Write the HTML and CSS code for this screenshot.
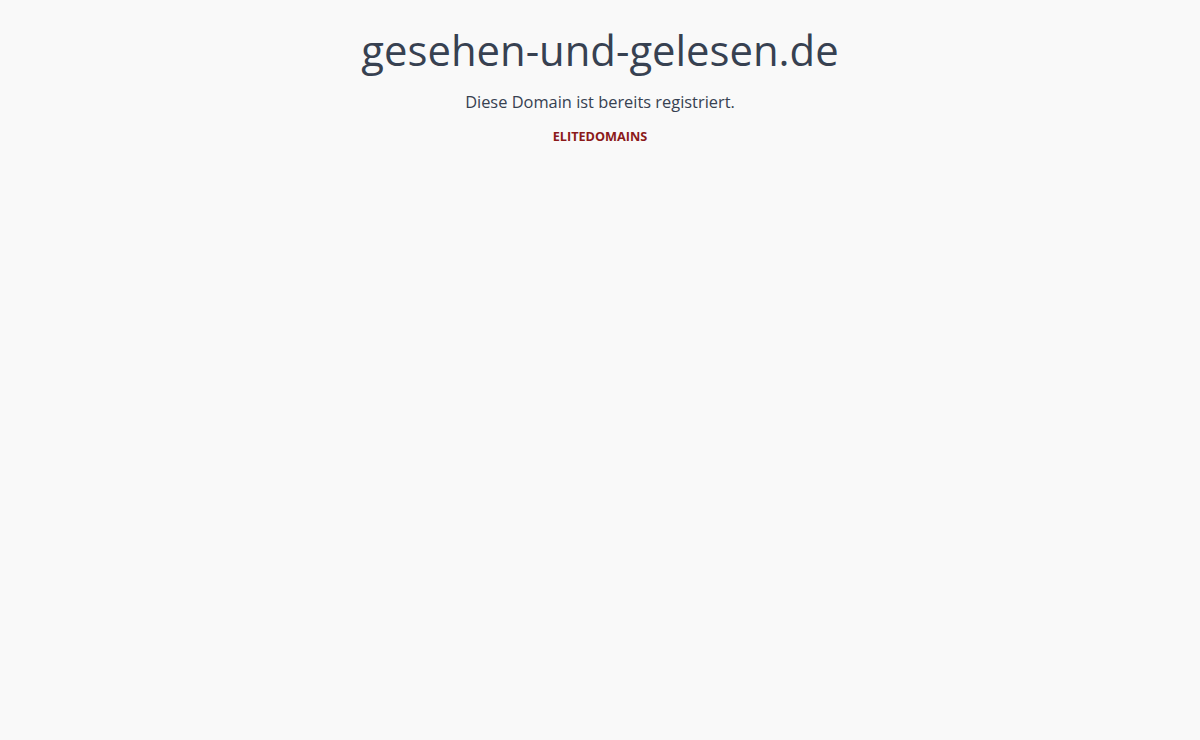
FILE: index.html
```html
<!DOCTYPE html>
<html lang="de">
<head>
<meta charset="utf-8">
<title>gesehen-und-gelesen.de</title>
<link rel="stylesheet" href="styles.css">
</head>
<body>
<main class="wrap">
  <h1 class="title">gesehen-und-gelesen.de</h1>
  <p class="sub">Diese Domain ist bereits registriert.</p>
  <a class="brand" href="#">ELITEDOMAINS</a>
</main>
</body>
</html>
```
FILE: styles.css
```css
html, body {
  margin: 0;
  padding: 0;
  background: #f9f9f9;
  height: 100%;
}
body {
  font-family: "Open Sans", "Noto Sans", "DejaVu Sans", sans-serif;
  color: #374151;
}
.wrap {
  display: flex;
  flex-direction: column;
  align-items: center;
  padding-top: 24px;
}
.title {
  margin: 0;
  font-size: 41.8px;
  font-weight: 400;
  line-height: 52px;
  color: #374151;
}
.sub {
  margin: 14px 0 0;
  font-size: 16.4px;
  line-height: 24px;
  color: #374151;
}
.brand {
  margin-top: 13px;
  font-size: 12.7px;
  font-weight: 700;
  line-height: 18px;
  color: #8b1a1a;
  text-decoration: none;
}
```
